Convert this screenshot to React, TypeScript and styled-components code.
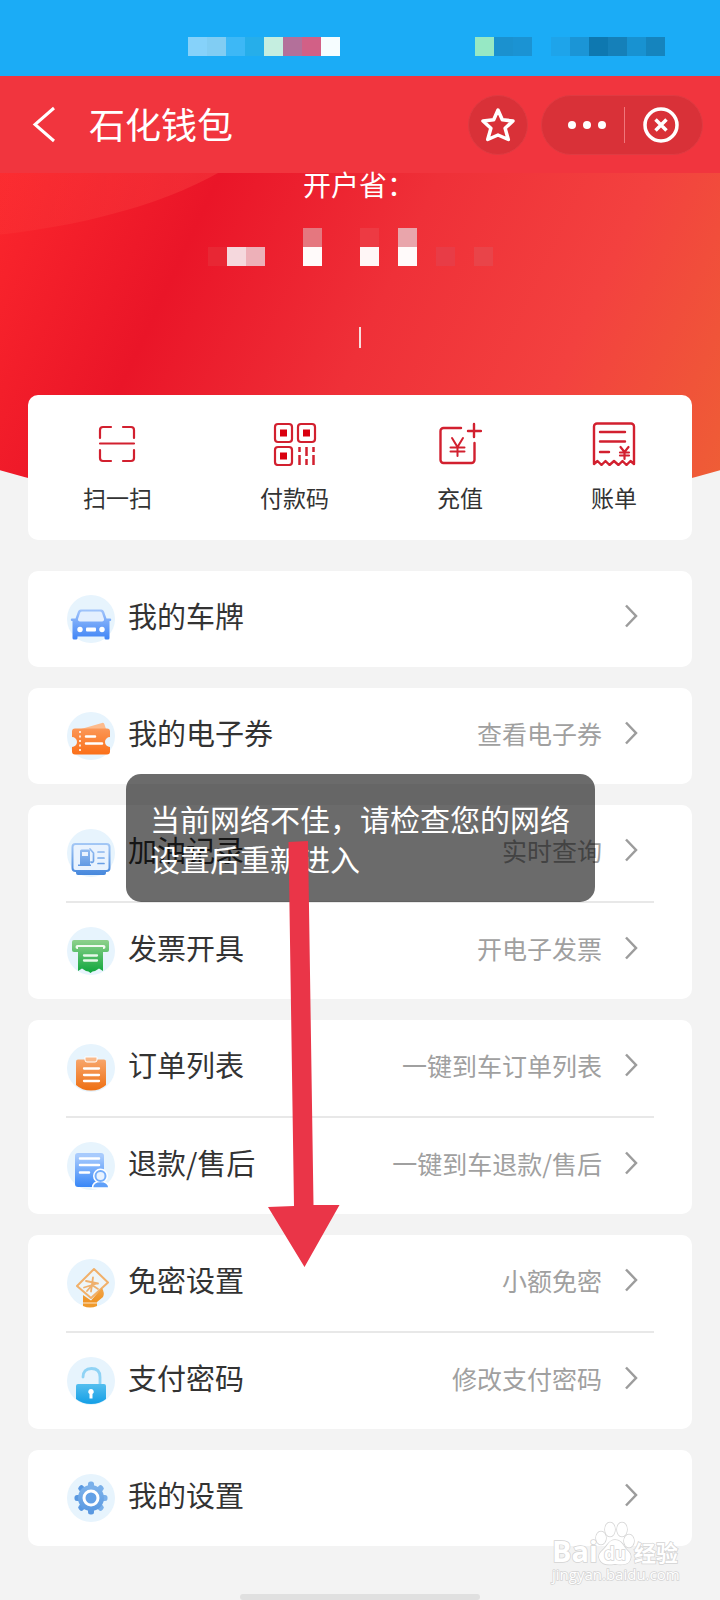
import React from "react";
import styled, { createGlobalStyle } from "styled-components";

const GlobalStyle = createGlobalStyle`
  * { box-sizing: border-box; }
  body {
    margin: 0;
    background: #f3f3f3;
    font-family: "Noto Sans CJK SC", "Noto Sans", sans-serif;
    color: #333;
  }
  button {
    border: 0;
    padding: 0;
    margin: 0;
    background: none;
    font: inherit;
    color: inherit;
    cursor: pointer;
  }
  svg { display: block; }
`;

const Page = styled.div`
  position: relative;
  display: flex;
  flex-direction: column;
`;

/* ---------- status bar ---------- */

const StatusBar = styled.div`
  display: flex;
  height: 76px;
  padding: 37px 55px 0 188px;
  justify-content: space-between;
  background: #1bacf6;
`;

const Mosaic = styled.div<{ $columns: number }>`
  display: grid;
  grid-template-columns: repeat(${(p) => p.$columns}, 19px);
  grid-auto-rows: 19px;
`;

const Cell = styled.span<{ $tone: string }>`
  background: ${(p) => p.$tone};
`;

/* ---------- navigation bar ---------- */

const NavBar = styled.header`
  display: flex;
  align-items: center;
  height: 97px;
  padding: 0 17px 0 29px;
  background: #f1353e;
  color: #fff;
`;

const BackButton = styled.button`
  width: 60px;
`;

const Title = styled.h1`
  margin: 0;
  flex: 1;
  padding-bottom: 4px;
  font-size: 36px;
  line-height: 52px;
  font-weight: 400;
`;

const StarButton = styled.button`
  display: grid;
  place-items: center;
  width: 60px;
  height: 60px;
  margin-right: 13px;
  border-radius: 50%;
  border: 1px solid #df3b42;
  background: #d93138;
`;

const Capsule = styled.div`
  display: flex;
  align-items: center;
  width: 162px;
  height: 60px;
  padding: 0 4px 0 8px;
  border-radius: 30px;
  border: 1px solid #df3b42;
  background: #d93138;
`;

const CapsuleButton = styled.button`
  display: grid;
  place-items: center;
  flex: 1;
  height: 36px;

  & + & {
    border-left: 1px solid #f0767b;
  }
`;

/* ---------- hero ---------- */

const Hero = styled.section`
  position: relative;
  display: flex;
  flex-direction: column;
  align-items: center;
  height: 222px;
  color: #fff;

  &::before,
  &::after {
    content: "";
    position: absolute;
    z-index: -1;
    inset: 0 0 auto;
    height: 348px;
    clip-path: ellipse(180% 1290px at 50% -942px);
    background: linear-gradient(
      115deg,
      #fb262c 0%,
      #ea1528 25%,
      #ef3038 50%,
      #f3413f 74%,
      #ee6035 100%
    );
  }

  &::after {
    height: 66px;
    clip-path: ellipse(400px 170px at -100px -103px);
    background: linear-gradient(90deg, rgba(255, 90, 80, 0.12), rgba(255, 90, 80, 0.3) 220px);
  }
`;

const Province = styled.p`
  margin: 0 0 32px;
  padding-right: 2px;
  font-size: 28px;
  line-height: 23px;
`;

const Caret = styled.span`
  width: 2px;
  height: 21px;
  margin-top: 61px;
  background: #f7dcdc;
`;

/* ---------- cards ---------- */

const Main = styled.main`
  display: flex;
  flex-direction: column;
  gap: 21px;
  padding: 0 28px;
`;

const QuickCard = styled.nav`
  display: flex;
  justify-content: space-between;
  align-items: flex-start;
  margin-bottom: 10px;
  padding: 27px 55px 0;
  height: 145px;
  border-radius: 10px;
  background: #fff;
`;

const QuickButton = styled.button`
  display: flex;
  flex-direction: column;
  align-items: center;
  gap: 14px;
  font-size: 23px;
  line-height: 34px;
`;

const Card = styled.section`
  padding: 0 38px;
  border-radius: 10px;
  background: #fff;
`;

const Row = styled.button`
  display: flex;
  align-items: center;
  width: 100%;
  height: 96px;
  padding-right: 16px;
  text-align: left;

  & + & {
    height: 98px;
    border-top: 2px solid #e8e8e8;
  }
`;

const RowLabel = styled.span`
  flex: 1;
  margin-left: 12px;
  padding-bottom: 8px;
  font-size: 29px;
  line-height: 40px;
`;

const RowDetail = styled.span`
  margin-right: 22px;
  padding-bottom: 6px;
  font-size: 25px;
  line-height: 36px;
  color: #a0a0a0;
`;

const ChevronSlot = styled.span`
  padding-bottom: 6px;
`;

/* ---------- overlays ---------- */

const Toast = styled.div`
  position: absolute;
  top: 774px;
  left: 50%;
  width: 469px;
  margin-left: -234px;
  padding: 24px;
  border-radius: 15px;
  background: rgba(0, 0, 0, 0.58);
  color: #fff;
  font-size: 30px;
  line-height: 40px;
`;

const Arrow = styled.svg`
  position: absolute;
  top: 840px;
  left: 50%;
  margin-left: -92px;
  pointer-events: none;
`;

const Footer = styled.footer`
  display: flex;
  justify-content: center;
  align-items: flex-end;
  height: 54px;
`;

const HomeIndicator = styled.div`
  width: 240px;
  height: 6px;
  border-radius: 3px;
  background: #e0e0e0;
`;

const Watermark = styled.svg`
  position: absolute;
  right: 36px;
  bottom: 10px;
  pointer-events: none;
`;

/* ---------- icons ---------- */

const red = "#d2202f";

const ScanIcon = () => (
  <svg width="44" height="44" viewBox="0 0 44 44" fill="none" stroke={red} strokeWidth="2.200" strokeLinecap="round">
    <path d="M4 16V8a3 3 0 0 1 3-3h8M27 5h8a3 3 0 0 1 3 3v8M4 28v8a3 3 0 0 0 3 3h8M27 39h8a3 3 0 0 0 3-3v-8M4 21.500h34" />
  </svg>
);

const QrIcon = () => (
  <svg width="44" height="44" viewBox="0 0 44 44" fill="none" stroke={red} strokeWidth="2.200">
    <rect x="2" y="2" width="17" height="18" rx="3" />
    <rect x="25" y="2" width="17" height="18" rx="3" />
    <rect x="2" y="25" width="17" height="18" rx="3" />
    <path d="M7 7.500h7v7h-7zM30 7.500h7v7h-7zM7 30.500h7v7h-7z" fill="#d9000f" stroke="none" />
    <path d="M26.500 25v5M26.500 33v10M33.500 25v9M33.500 37v6M40.500 25v5M40.500 33v10" strokeWidth="2.500" />
  </svg>
);

const RechargeIcon = () => (
  <svg width="44" height="44" viewBox="0 0 44 44" fill="none" stroke={red} strokeWidth="2.400" strokeLinecap="round">
    <path d="M23 6H5.500a3 3 0 0 0-3 3v29a3 3 0 0 0 3 3h28a3 3 0 0 0 3-3V21" />
    <path d="M36 2v13M30 9h13" />
    <path d="M14 16l5.500 9 5.500-9M12.500 25.500h14M12.500 29.500h14M19.500 25v9" strokeWidth="2" />
  </svg>
);

const BillIcon = () => (
  <svg width="44" height="44" viewBox="0 0 44 44" fill="none" stroke={red} strokeWidth="2.400" strokeLinecap="round" strokeLinejoin="round">
    <path d="M2 42V4.500a3 3 0 0 1 3-3h34a3 3 0 0 1 3 3V42l-3.500-3-4 4-4-4-4 4-4.500-4-4.500 4-4-4-4 4-4-4z" />
    <path d="M8 10h25M8 19.500h25M8 30h9" />
    <path d="M28.500 25l4 5 4-5M28 30.500h9M28 33.500h9M32.500 30v7" strokeWidth="2.200" />
  </svg>
);

const Chevron = () => (
  <ChevronSlot>
    <svg width="14" height="24" viewBox="0 0 14 24" fill="none" stroke="#9c9c9c" strokeWidth="2.500">
      <path d="M2 1.500L12 12 2 22.500" />
    </svg>
  </ChevronSlot>
);

const RoundIcon = ({ id, from, to, children }: { id: string; from: string; to: string; children: React.ReactNode }) => (
  <svg width="50" height="52" viewBox="0 0 50 52">
    <defs>
      <linearGradient id={id} gradientUnits="userSpaceOnUse" x1="0" y1="16" x2="0" y2="48">
        <stop offset="0" stopColor={from} />
        <stop offset="1" stopColor={to} />
      </linearGradient>
    </defs>
    <circle cx="25" cy="26" r="24" fill="#e7f4fd" />
    {children}
  </svg>
);

const CarIcon = () => (
  <RoundIcon id="car" from="#a3c5fb" to="#3b82f6">
    <path fill="url(#car)" d="M15 16.500h20a3 3 0 0 1 3 2l2.500 7h3.500a1.200 1.200 0 0 1 0 2.500h-.5V45a1.500 1.500 0 0 1-1.500 1.500h-2a1.500 1.500 0 0 1-1.500-1.500v-1.500H11.500V45a1.500 1.500 0 0 1-1.500 1.500H8A1.500 1.500 0 0 1 6.500 45V28H6a1.200 1.200 0 0 1 0-2.500h3.500l2.500-7a3 3 0 0 1 3-2z" />
    <path fill="#e4effe" d="M16 18.500h18a2 2 0 0 1 2 1.500l2 6a2 2 0 0 1-2 2.500H14a2 2 0 0 1-2-2.500l2-6a2 2 0 0 1 2-1.500z" />
    <circle cx="14" cy="36.500" r="2.700" fill="#fff" />
    <circle cx="36" cy="36.500" r="2.700" fill="#fff" />
    <rect x="20" y="34.500" width="10" height="4" rx="1" fill="#fff" />
  </RoundIcon>
);

const TicketIcon = () => (
  <RoundIcon id="ticket" from="#fb9a5c" to="#fb6a10">
    <path fill="#fdbb8c" d="M15 19l21-6a2 2 0 0 1 2.500 1.500l2 6z" />
    <path fill="url(#ticket)" d="M9 18.500h32a3 3 0 0 1 3 3V27a5 5 0 0 0 0 10v4.500a3 3 0 0 1-3 3H9a3 3 0 0 1-3-3V37a5 5 0 0 0 0-10v-5.500a3 3 0 0 1 3-3z" />
    <path fill="none" stroke="#fff" strokeWidth="2.500" strokeLinecap="round" d="M20 26.500h9M20 33.500h16" />
    <path fill="none" stroke="#ffe3cf" strokeWidth="2" strokeDasharray="2 2.500" d="M14 21v20" />
  </RoundIcon>
);

const FuelIcon = () => (
  <RoundIcon id="fuel" from="#a5c9f6" to="#4687dc">
    <rect x="6.500" y="17" width="37" height="27" rx="3" fill="#e9f3fe" stroke="url(#fuel)" strokeWidth="2" />
    <path fill="url(#fuel)" d="M10 44.500h30v1.500a2 2 0 0 1-2 2H12a2 2 0 0 1-2-2zM14 24a1.500 1.500 0 0 1 1.500-1.500h7A1.500 1.500 0 0 1 24 24v13.500h1V39H12v-1.500h2z" />
    <rect x="16" y="25" width="6" height="4" fill="#e9f3fe" />
    <path fill="none" stroke="url(#fuel)" strokeWidth="1.700" strokeLinecap="round" d="M24 22l3.500 4v8a1.500 1.500 0 0 1-2.500 1M32 25h6M32 31h6.010M32 36.500h6" />
  </RoundIcon>
);

const InvoiceIcon = () => (
  <RoundIcon id="invoice" from="#8bd08a" to="#0ea63c">
    <rect x="6" y="15" width="37" height="12" rx="2" fill="url(#invoice)" />
    <rect x="9.500" y="20" width="30" height="4" rx="2" fill="#f1faf1" />
    <path fill="url(#invoice)" d="M12 22h25v24l-4-2.500-4 2.500-2.500.5-2 1.500-2-1.500-2.500-.5-4-2.500-4 2.500z" />
    <path fill="none" stroke="#e7f8e9" strokeWidth="2.300" strokeLinecap="round" d="M18 30.500h13M18 35.500h13" />
  </RoundIcon>
);

const OrderIcon = () => (
  <RoundIcon id="order" from="#f8a86f" to="#ee7014">
    <path fill="url(#order)" d="M12 17.500h26a2 2 0 0 1 2 2V43q-6 5.500-15 5.500T10 43V19.500a2 2 0 0 1 2-2z" />
    <path fill="#f9b98b" stroke="#fff" strokeWidth="1" d="M19 15h12v3a2 2 0 0 1-2 2h-8a2 2 0 0 1-2-2z" />
    <path fill="none" stroke="#fff" strokeWidth="2.300" strokeLinecap="round" d="M18 26.500h15M18 33h15M18 39h15" />
  </RoundIcon>
);

const RefundIcon = () => (
  <RoundIcon id="refund" from="#a8cbfd" to="#3384f7">
    <rect x="9" y="13" width="29" height="34" rx="3" fill="url(#refund)" />
    <path fill="none" stroke="#fff" strokeWidth="2.500" strokeLinecap="round" d="M14 18.500h19M14 25h19M14 32.500h9" />
    <circle cx="34.500" cy="36" r="6.500" fill="#dcecff" stroke="#fff" strokeWidth="2" />
    <path fill="#5fa0f9" stroke="#fff" strokeWidth="1.500" d="M26.500 48q0-6.500 8-6.500t8.500 6.500z" />
    <circle cx="34.500" cy="36" r="5" fill="#e7f2ff" stroke="#74aefb" strokeWidth="2" />
  </RoundIcon>
);

const NoPinIcon = () => (
  <RoundIcon id="nopin" from="#f3b873" to="#ef8f1a">
    <path fill="#eef5f8" stroke="#f1b06a" strokeWidth="2" strokeLinejoin="round" d="M28 12l14 13.500L25 41 11 29z" />
    <path fill="none" stroke="#efb06d" strokeWidth="1.800" strokeLinecap="round" d="M20 24l12 2.500M18 30.500l13-4M27 20.500l-2 14M26 28l-5 6M26 28l6 4" />
    <path fill="url(#nopin)" d="M17 38l8 5.500L36 31q3 5 1 9l-6 5v3.500H17z" />
    <path fill="#ef9a2c" d="M17 47h14v2q-7 3-14 0z" />
    <path fill="none" stroke="#fdebd3" strokeWidth="1" d="M17 46h14" />
  </RoundIcon>
);

const LockIcon = () => (
  <RoundIcon id="lock" from="#7fd3f5" to="#16a0e6">
    <path fill="none" stroke="#8fd3f5" strokeWidth="2.800" strokeLinecap="round" d="M17 22q0-8.500 8.500-8.500T34 22v9" />
    <path fill="url(#lock)" d="M12 29h26a2 2 0 0 1 2 2v13q-6 5-15 5t-15-5V31a2 2 0 0 1 2-2z" />
    <path fill="#fff" d="M25 34a2.700 2.700 0 0 1 1.500 5v4.500h-3V39A2.700 2.700 0 0 1 25 34z" />
  </RoundIcon>
);

const GearIcon = () => (
  <RoundIcon id="gear" from="#7ab0ea" to="#4f91de">
    <g fill="url(#gear)">
      {[0, 45, 90, 135].map((angle) => (
        <rect key={angle} x="22" y="9.500" width="6" height="33" rx="2.500" transform={`rotate(${angle} 25 26)`} />
      ))}
      <circle cx="25" cy="26" r="13" />
    </g>
    <circle cx="25" cy="26" r="7" fill="#64a1e6" stroke="#fff" strokeWidth="3" />
  </RoundIcon>
);

/* ---------- data ---------- */

const leftStatus = ["#86d2fa", "#81cdf3", "#3db8f6", "#26aeea", "#c5eee0", "#b3709a", "#d26086", "#f6fdff"];
const rightStatus = ["#96e8c4", "#1b91cf", "#1b93d3", "#1bacf6", "#1ea4ea", "#1b95d6", "#0e78b0", "#1580b9", "#1892d1", "#1584be"];

const clear = "transparent";
const accountCells = [
  clear, clear, clear, clear, clear, "#e5777f", clear, clear, "#ed3a43", clear, "#e9a5ab", clear, clear, clear, clear, clear,
  "#e82734", "#f5d8dd", "#edb0b8", clear, clear, "#fffafa", clear, clear, "#fff6f6", clear, "#fffafa", clear, "#e83c46", clear, "#e94449", clear,
];

const quickActions = [
  { label: "扫一扫", Icon: ScanIcon },
  { label: "付款码", Icon: QrIcon },
  { label: "充值", Icon: RechargeIcon },
  { label: "账单", Icon: BillIcon },
];

const groups = [
  [{ label: "我的车牌", detail: "", Icon: CarIcon }],
  [{ label: "我的电子券", detail: "查看电子券", Icon: TicketIcon }],
  [
    { label: "加油记录", detail: "实时查询", Icon: FuelIcon },
    { label: "发票开具", detail: "开电子发票", Icon: InvoiceIcon },
  ],
  [
    { label: "订单列表", detail: "一键到车订单列表", Icon: OrderIcon },
    { label: "退款/售后", detail: "一键到车退款/售后", Icon: RefundIcon },
  ],
  [
    { label: "免密设置", detail: "小额免密", Icon: NoPinIcon },
    { label: "支付密码", detail: "修改支付密码", Icon: LockIcon },
  ],
  [{ label: "我的设置", detail: "", Icon: GearIcon }],
];

export default function App() {
  return (
    <Page>
      <GlobalStyle />
      <StatusBar>
        <Mosaic $columns={8}>
          {leftStatus.map((tone, i) => <Cell key={i} $tone={tone} />)}
        </Mosaic>
        <Mosaic $columns={10}>
          {rightStatus.map((tone, i) => <Cell key={i} $tone={tone} />)}
        </Mosaic>
      </StatusBar>

      <NavBar>
        <BackButton aria-label="返回">
          <svg width="28" height="40" viewBox="0 0 28 40" fill="none" stroke="#fff" strokeWidth="3">
            <path d="M25 3L6 19.500 25 36" />
          </svg>
        </BackButton>
        <Title>石化钱包</Title>
        <StarButton aria-label="收藏">
          <svg width="40" height="40" viewBox="0 0 40 40" fill="none" stroke="#fff" strokeWidth="3.500" strokeLinejoin="round">
            <path d="M20 5l4.300 9.700 10.700 1.300-7.900 7.200 3.200 11.300L20 30l-10.300 4.500 3.200-11.300L5 16l10.700-1.300z" />
          </svg>
        </StarButton>
        <Capsule>
          <CapsuleButton aria-label="更多">
            <svg width="40" height="10" viewBox="0 0 40 10" fill="#fff">
              <circle cx="5" cy="5" r="4" />
              <circle cx="20" cy="5" r="4" />
              <circle cx="35" cy="5" r="4" />
            </svg>
          </CapsuleButton>
          <CapsuleButton aria-label="关闭">
            <svg width="36" height="36" viewBox="0 0 36 36" fill="none" stroke="#fff" strokeWidth="3.500">
              <circle cx="18" cy="18" r="16" />
              <path d="M12.500 12.500l11 11M23.500 12.500l-11 11" />
            </svg>
          </CapsuleButton>
        </Capsule>
      </NavBar>

      <Hero>
        <Province>开户省：</Province>
        <Mosaic $columns={16}>
          {accountCells.map((tone, i) => <Cell key={i} $tone={tone} />)}
        </Mosaic>
        <Caret />
      </Hero>

      <Main>
        <QuickCard>
          {quickActions.map(({ label, Icon }) => (
            <QuickButton key={label}>
              <Icon />
              {label}
            </QuickButton>
          ))}
        </QuickCard>
        {groups.map((rows) => (
          <Card key={rows[0].label}>
            {rows.map(({ label, detail, Icon }) => (
              <Row key={label}>
                <Icon />
                <RowLabel>{label}</RowLabel>
                {detail && <RowDetail>{detail}</RowDetail>}
                <Chevron />
              </Row>
            ))}
          </Card>
        ))}
      </Main>

      <Footer>
        <HomeIndicator />
      </Footer>

      <Toast role="status">当前网络不佳，请检查您的网络设置后重新进入</Toast>

      <Arrow width="74" height="430" viewBox="0 0 74 430" fill="#ea3548">
        <path d="M20.500 2L40 1l5.500 364H71.500L36.500 427 0 367l26-1z" />
      </Arrow>

      <Watermark width="136" height="70" viewBox="0 0 136 70" fill="#fff" stroke="#d4d4d4" strokeWidth="1.500">
        <g style={{ paintOrder: "stroke" }}>
          <text x="4" y="42" fontFamily="Open Sans" fontWeight="700" fontSize="29">Bai</text>
          <ellipse cx="53" cy="18" rx="5" ry="6.500" />
          <ellipse cx="62" cy="9.500" rx="5" ry="7" />
          <ellipse cx="74" cy="9.500" rx="5" ry="7" />
          <ellipse cx="81" cy="21" rx="5" ry="6.500" />
          <path d="M67 20c6 0 8 5 11 9 4 4 6 6 4 11s-8 5-15 4c-7 1-12 1-15-4s1-8 4-11c4-4 5-9 11-9z" />
          <text x="56" y="40" fontFamily="Open Sans" fontWeight="700" fontSize="17">du</text>
          <text x="86" y="41" fontFamily="Noto Sans CJK SC" fontWeight="700" fontSize="22">经验</text>
          <text x="4" y="60" fontFamily="Open Sans" fontSize="15">jingyan.baidu.com</text>
        </g>
      </Watermark>
    </Page>
  );
}
